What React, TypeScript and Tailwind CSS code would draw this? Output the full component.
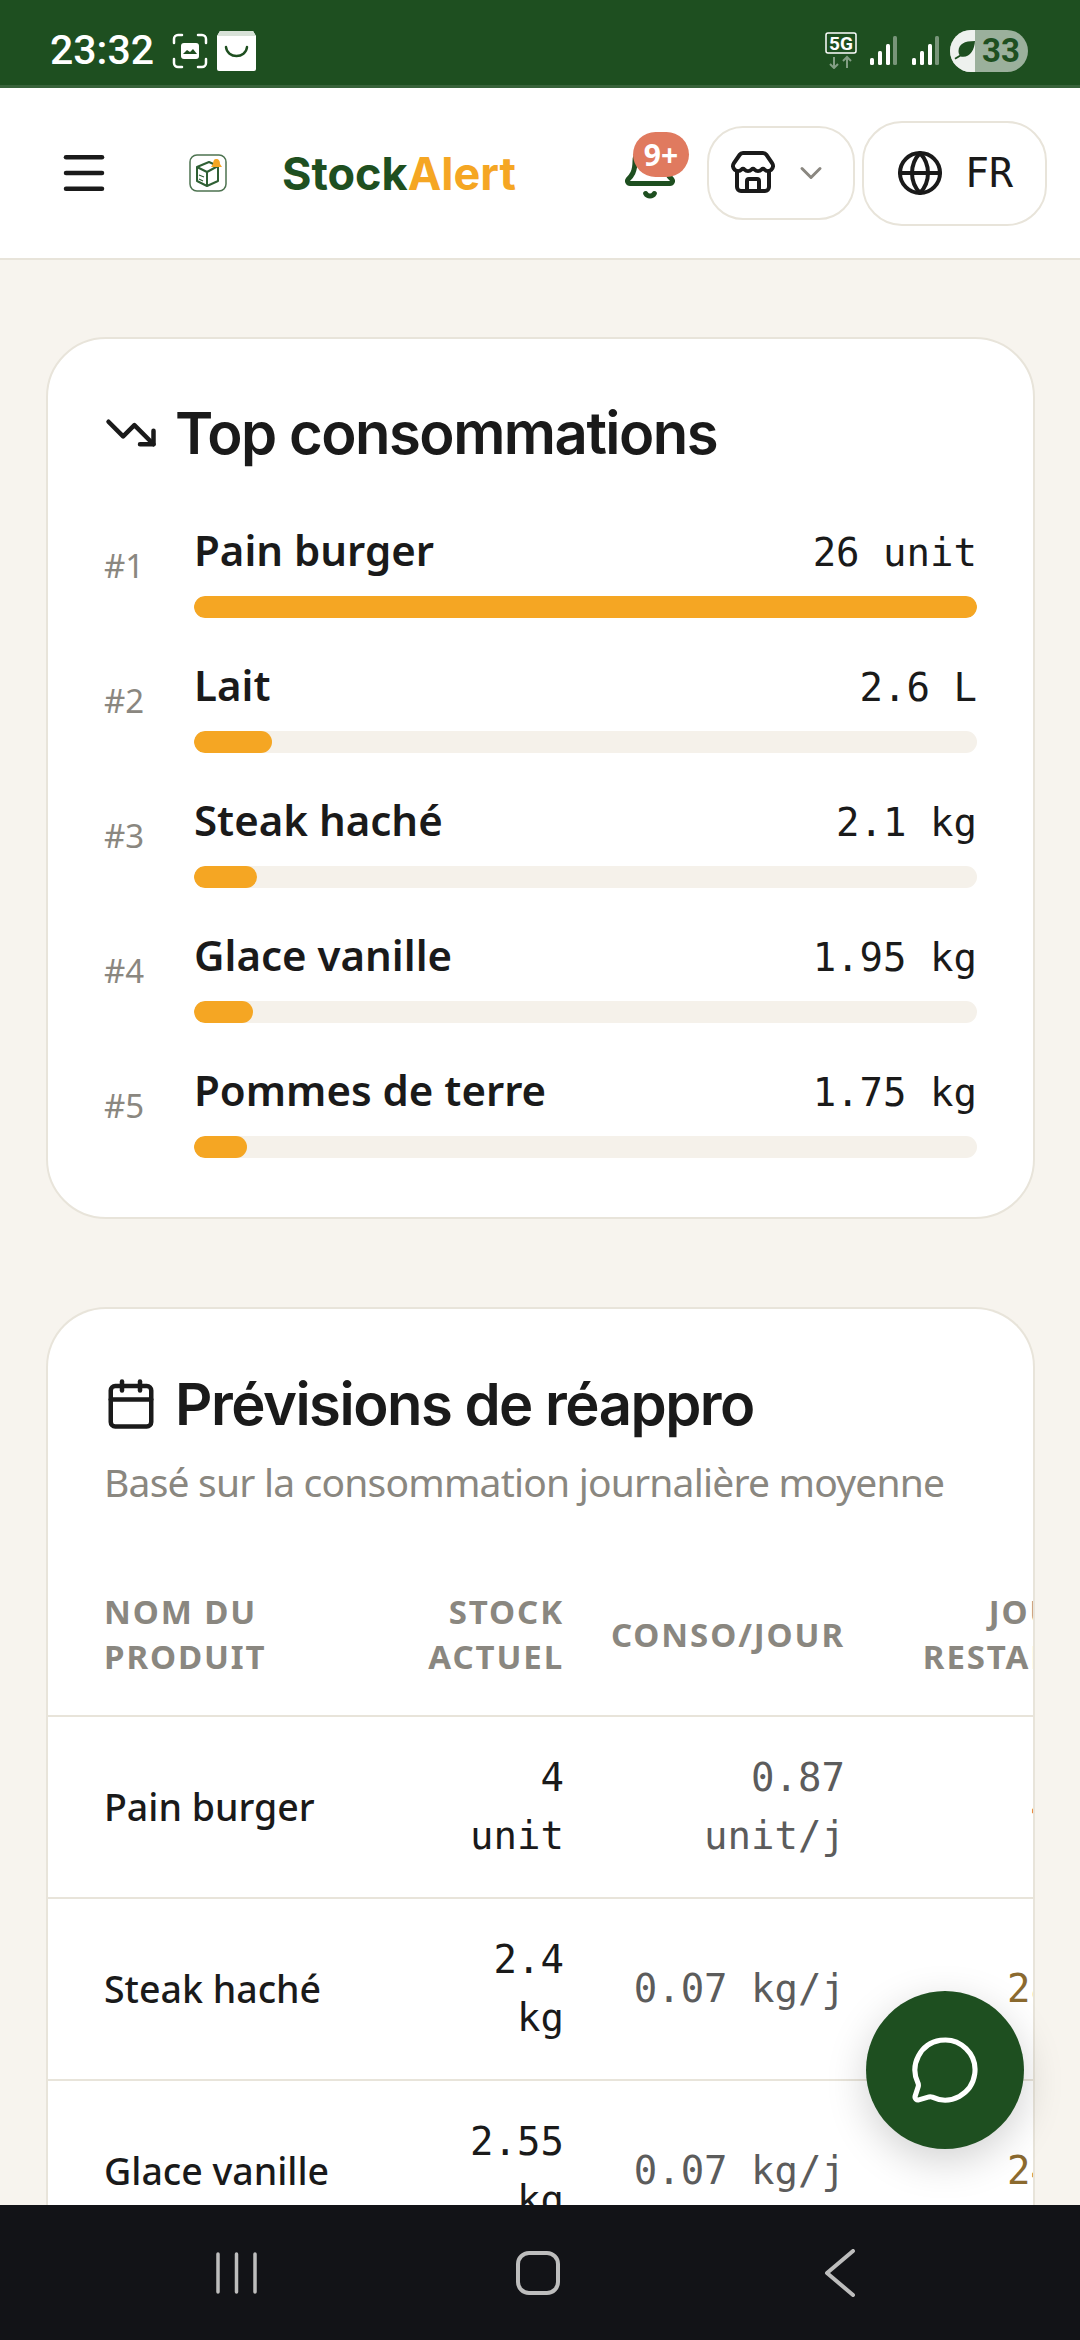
import { Bell, Calendar, ChevronDown, Globe, Menu, MessageCircle, Store, TrendingDown } from "lucide-react";

const top = [
  { rank: "#1", name: "Pain burger", value: "26 unit", pct: 100 },
  { rank: "#2", name: "Lait", value: "2.6 L", pct: 10 },
  { rank: "#3", name: "Steak haché", value: "2.1 kg", pct: 8.08 },
  { rank: "#4", name: "Glace vanille", value: "1.95 kg", pct: 7.5 },
  { rank: "#5", name: "Pommes de terre", value: "1.75 kg", pct: 6.73 },
];

const rows = [
  { name: "Pain burger", stock: "4 unit", conso: "0.87 unit/j", days: "4 j", color: "text-[#c0392b]" },
  { name: "Steak haché", stock: "2.4 kg", conso: "0.07 kg/j", days: "28 j", color: "text-[#8b6a2f]" },
  { name: "Glace vanille", stock: "2.55 kg", conso: "0.07 kg/j", days: "24 j", color: "text-[#8b6a2f]" },
];

function Signal() {
  return (
    <svg width="27" height="30" viewBox="0 0 27 30">
      <rect x="0" y="22" width="4" height="7" rx="1.5" fill="#fff" />
      <rect x="8" y="15" width="4" height="14" rx="1.5" fill="#fff" />
      <rect x="16" y="8" width="4" height="21" rx="1.5" fill="#fff" />
      <rect x="23" y="0" width="4" height="29" rx="1.5" fill="#fff" fillOpacity="0.4" />
    </svg>
  );
}

function StatusBar() {
  return (
    <div className="flex h-[88px] shrink-0 items-center border-b-[3px] border-[#38623a] bg-[#1e4f20] pl-[50px] pr-[52px] pt-[16px] text-white">
      <span className="font-['Roboto',sans-serif] text-[41px] font-medium leading-none">23:32</span>
      {/* capture screen */}
      <svg className="ml-[18px]" width="36" height="36" viewBox="0 0 36 36" fill="none">
        <path d="M2 10V6a4 4 0 0 1 4-4h4M26 2h4a4 4 0 0 1 4 4v4M34 26v4a4 4 0 0 1-4 4h-4M10 34H6a4 4 0 0 1-4-4v-4" stroke="#fff" strokeWidth="2.5" strokeLinecap="round" />
        <rect x="9" y="10" width="18" height="16" rx="3" fill="#fff" />
        <path d="M11 21l4-4 3 2 3-3 4 5z" fill="#1e4f20" />
      </svg>
      {/* shopping bag */}
      <svg className="ml-[9px]" width="39" height="40" viewBox="0 0 39 40">
        <path d="M3 0h33l3 5v33a2 2 0 0 1-2 2H2a2 2 0 0 1-2-2V5z" fill="#fff" />
        <path d="M0 5L3 0h33l3 5z" fill="#d8e2d8" />
        <path d="M9 16c1 12 20 12 21 0" fill="none" stroke="#1e4f20" strokeWidth="2.5" strokeLinecap="round" />
      </svg>
      <div className="ml-auto flex items-center">
        <svg width="32" height="37" viewBox="0 0 32 37" fill="none">
          <rect x="1" y="1" width="30" height="20" rx="2" stroke="#fff" strokeWidth="1.5" />
          <path d="M9 25v11M5 32l4 4 4-4M22 36V25M18 29l4-4 4 4" stroke="#fff" strokeOpacity="0.45" strokeWidth="2" />
          <text x="16" y="17.500" textAnchor="middle" fontFamily="Roboto, sans-serif" fontWeight="700" fontSize="19" fill="#fff">5G</text>
        </svg>
        <div className="ml-[13px]"><Signal /></div>
        <div className="ml-[15px]"><Signal /></div>
        <div className="relative ml-[11px] flex h-[42px] w-[78px] items-center overflow-hidden rounded-full bg-[#9bb09c]">
          <div className="h-full w-[25px] bg-[#eef1ee]" />
          <span className="ml-[7px] font-['Roboto',sans-serif] text-[33px] font-bold leading-none text-[#1e4f20]">33</span>
          <svg className="absolute left-[4px] top-[11px]" width="22" height="20" viewBox="0 0 22 20">
            <path d="M21 0C10 0 5 3 4.500 10c0 2 .5 3 1 4l-5 3 1 1.500 5-3c9 2 14-6 14.500-15.500z" fill="#1e4f20" />
          </svg>
        </div>
      </div>
    </div>
  );
}

function Logo() {
  return (
    <svg width="38" height="38" viewBox="0 0 38 38" fill="none">
      <rect x="1" y="1" width="36" height="36" rx="7" fill="#fff" stroke="#4d7350" strokeWidth="1.5" />
      <path d="M8 13l12-5 9 4v15l-11 5-10-5z" fill="none" stroke="#2f6034" strokeWidth="2" strokeLinejoin="round" />
      <path d="M8 13l10 5 11-6M18 18v14" stroke="#2f6034" strokeWidth="2" />
      <path d="M10 21l5 2M10 25l4 2" stroke="#2f6034" strokeWidth="1.2" />
      <path d="M27 5c3 0 4 2 4 5l2 3h-11l2-3c0-3 1-5 3-5z" fill="#f5a623" />
    </svg>
  );
}

function Header() {
  return (
    <div className="flex h-[172px] shrink-0 items-center border-b-2 border-[#e8e4da] bg-white pl-[57px]">
      <Menu className="h-[54px] w-[54px] text-[#1a1a1a]" strokeWidth={2} />
      <div className="ml-[78px]"><Logo /></div>
      <div className="ml-[55px] font-['Inter',sans-serif] text-[45px] font-bold leading-none">
        <span className="text-[#1e4f20]">Stock</span><span className="text-[#f5a623]">Alert</span>
      </div>
      <div className="relative -mt-[4px] ml-[104px] h-[60px] w-[60px]">
        <Bell className="h-[60px] w-[60px] text-[#1e4f20]" strokeWidth={2} />
        <span className="absolute -top-[9px] left-[13px] flex h-[45px] w-[56px] items-center justify-center rounded-full bg-[#e07a5f] font-['Noto_Sans',sans-serif] text-[30px] font-bold leading-none text-white">9+</span>
      </div>
      <div className="ml-[27px] flex h-[94px] w-[148px] items-center rounded-[36px] border-2 border-[#e8e4da] pl-[20px]">
        <Store className="h-[48px] w-[48px] text-[#1a1a1a]" strokeWidth={2} />
        <ChevronDown className="ml-[16px] h-[36px] w-[36px] text-[#8a8780]" strokeWidth={2} />
      </div>
      <div className="ml-[7px] flex h-[105px] w-[185px] items-center rounded-[40px] border-2 border-[#e8e4da] pl-[32px]">
        <Globe className="h-[48px] w-[48px] text-[#1a1a1a]" strokeWidth={2} />
        <span className="ml-[21px] font-['DejaVu_Sans_Mono',monospace] text-[40px] leading-none text-[#1a1a1a]">FR</span>
      </div>
    </div>
  );
}

function TopCard() {
  return (
    <div className="rounded-[60px] border-2 border-[#e8e4da] bg-white pb-[59px] pl-[56px] pr-[56px] pt-[58px]">
      <div className="flex items-center">
        <TrendingDown className="h-[54px] w-[54px] text-[#1a1a1a]" strokeWidth={2} />
        <h2 className="ml-[17px] font-['Inter',sans-serif] text-[58px] font-semibold leading-[72px] tracking-[-1.5px] text-[#1a1a1a]">Top consommations</h2>
      </div>
      <div className="mt-[49px] flex flex-col gap-[35px]">
        {top.map((item) => (
          <div key={item.rank} className="flex items-end">
            <span className="mb-[25px] w-[90px] font-['Noto_Sans',sans-serif] text-[33px] leading-[54px] text-[#8a8780]">{item.rank}</span>
            <div className="flex-1">
              <div className="flex items-center justify-between">
                <span className="font-['Noto_Sans',sans-serif] text-[42px] font-semibold leading-[63px] text-[#1a1a1a]">{item.name}</span>
                <span className="translate-y-[3px] font-['DejaVu_Sans_Mono',monospace] text-[39px] leading-[63px] text-[#1a1a1a]">{item.value}</span>
              </div>
              <div className="mt-[15px] h-[22px] overflow-hidden rounded-full bg-[#f5f1ea]">
                <div className="h-full rounded-full bg-[#f5a623]" style={{ width: `${item.pct}%` }} />
              </div>
            </div>
          </div>
        ))}
      </div>
    </div>
  );
}

function ForecastCard() {
  return (
    <div className="mt-[88px] overflow-hidden rounded-t-[60px] border-x-2 border-t-2 border-[#e8e4da] bg-white pt-[59px]">
      <div className="flex items-center pl-[56px]">
        <Calendar className="h-[54px] w-[54px] text-[#1a1a1a]" strokeWidth={2} />
        <h2 className="ml-[17px] font-['Inter',sans-serif] text-[58px] font-semibold leading-[72px] tracking-[-1.5px] text-[#1a1a1a]">Prévisions de réappro</h2>
      </div>
      <p className="mt-[13px] pl-[56px] font-['Noto_Sans',sans-serif] text-[39px] leading-[58px] tracking-[-0.8px] text-[#8a8780]">Basé sur la consommation journalière moyenne</p>
      <table className="mt-[42px] w-[1053px] table-fixed border-collapse">
        <colgroup>
          <col className="w-[283px]" />
          <col className="w-[235px]" />
          <col className="w-[280px]" />
          <col className="w-[255px]" />
        </colgroup>
        <thead>
          <tr className="border-b-2 border-[#e8e4da] font-['Noto_Sans',sans-serif] text-[33px] font-bold uppercase leading-[45px] tracking-[1.9px] text-[#8a8780]">
            <th className="py-[36px] pl-[56px] text-left font-bold">Nom du produit</th>
            <th className="py-[36px] pr-[2px] text-right font-bold">Stock actuel</th>
            <th className="py-[36px] pr-[1px] text-right font-bold">Conso/jour</th>
            <th className="py-[36px] pr-[1px] text-right font-bold">Jours restants</th>
          </tr>
        </thead>
        <tbody>
          {rows.map((row) => (
            <tr key={row.name} className="border-b-2 border-[#e8e4da]">
              <td className="py-[32px] pl-[56px] font-['Noto_Sans',sans-serif] text-[37.5px] font-medium text-[#1a1a1a]">{row.name}</td>
              <td className="py-[32px] pl-[100px] pr-[2px] text-right font-['DejaVu_Sans_Mono',monospace] text-[39px] leading-[58px] text-[#1a1a1a]">{row.stock}</td>
              <td className="py-[32px] pl-[40px] pr-[1px] text-right font-['DejaVu_Sans_Mono',monospace] text-[39px] leading-[58px] text-[#5c5c5c]">{row.conso}</td>
              <td className={`py-[32px] text-right font-['DejaVu_Sans_Mono',monospace] text-[39px] leading-[58px] ${row.color}`}>{row.days}</td>
            </tr>
          ))}
        </tbody>
      </table>
    </div>
  );
}

function NavBar() {
  return (
    <div className="flex h-[135px] shrink-0 items-center bg-[#121317] pl-[216px]">
      <svg width="41" height="42" viewBox="0 0 41 42">
        <path d="M2 2v38M20.500 2v38M39 2v38" stroke="#bdbdbd" strokeWidth="3.500" strokeLinecap="round" />
      </svg>
      <svg className="ml-[259px]" width="44" height="44" viewBox="0 0 44 44" fill="none">
        <rect x="2" y="2" width="40" height="40" rx="11" stroke="#bdbdbd" strokeWidth="4" />
      </svg>
      <svg className="ml-[264px]" width="32" height="48" viewBox="0 0 32 48" fill="none">
        <path d="M29 2L3 24l26 22" stroke="#bdbdbd" strokeWidth="4" strokeLinecap="round" strokeLinejoin="round" />
      </svg>
    </div>
  );
}

export default function App() {
  return (
    <div className="relative flex h-[2340px] w-[1080px] flex-col overflow-hidden bg-[#f7f4ee]">
      <StatusBar />
      <Header />
      <div className="flex-1 overflow-hidden pl-[46px] pr-[45px] pt-[77px]">
        <TopCard />
        <ForecastCard />
      </div>
      <NavBar />
      <button className="absolute left-[866px] top-[1991px] flex h-[158px] w-[158px] items-center justify-center rounded-full bg-[#1e4f20] shadow-[0_12px_40px_rgba(0,0,0,0.18)]">
        <MessageCircle className="h-[72px] w-[72px] text-white" strokeWidth={1.7} />
      </button>
    </div>
  );
}
